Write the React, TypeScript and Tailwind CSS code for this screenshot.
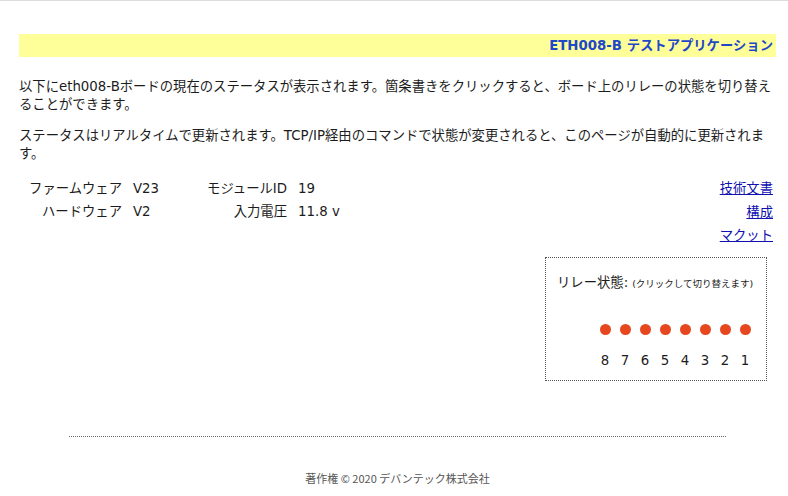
import React from "react";

const font = { fontFamily: '"DejaVu Sans", Verdana, "Noto Sans CJK JP", sans-serif' };

export default function App() {
  const relays = [8, 7, 6, 5, 4, 3, 2, 1];
  return (
    <div className="min-h-[496px] w-[788px] bg-white border-t border-[#dcdcdc] text-[#1c1c1c]" style={font}>
      <div className="ml-[19px] w-[757px] pt-[33px]">
        <div className="h-[23px] bg-[#ffff99] flex items-center justify-end pr-[3px]">
          <span className="text-[13.33px] font-bold text-[#1f48c9] leading-none">ETH008-B テストアプリケーション</span>
        </div>

        <p className="mt-[21px] text-[13.33px] leading-[18px]">
          以下にeth008-Bボードの現在のステータスが表示されます。箇条書きをクリックすると、ボード上のリレーの状態を切り替えることができます。
        </p>
        <p className="mt-[13px] text-[13.33px] leading-[18px]">
          ステータスはリアルタイムで更新されます。TCP/IP経由のコマンドで状態が変更されると、このページが自動的に更新されます。
        </p>

        <div className="mt-[14px] flex justify-between">
          <div className="grid grid-cols-[103px_60px_83px_auto] gap-x-[11px] text-[13.33px] leading-[23px] h-fit">
            <div className="text-right">ファームウェア</div>
            <div>V23</div>
            <div className="text-right">モジュールID</div>
            <div>19</div>
            <div className="text-right">ハードウェア</div>
            <div>V2</div>
            <div className="text-right">入力電圧</div>
            <div>11.8 v</div>
          </div>
          <div className="flex flex-col items-end pr-[3px] text-[13.33px] leading-[23.5px]">
            <a href="#" className="text-[#1010b0] underline">技術文書</a>
            <a href="#" className="text-[#1010b0] underline">構成</a>
            <a href="#" className="text-[#1010b0] underline">マクット</a>
          </div>
        </div>

        <div className="flex justify-end mt-[9px] pr-[9px]">
          <div className="w-[222px] h-[124px] border border-dotted border-[#555] pl-[11px] pr-[11px] pt-[16px]">
            <div className="flex items-baseline">
              <span className="text-[13.33px] leading-[18px]">リレー状態:</span>
              <span className="text-[9.5px] ml-[4px]">(クリックして切り替えます)</span>
            </div>
            <div className="flex justify-end mt-[32px]">
              {relays.map((n) => (
                <div key={n} className="w-[20px] flex justify-center">
                  <span className="block w-[11px] h-[11px] rounded-full bg-[#e6471f]" />
                </div>
              ))}
            </div>
            <div className="flex justify-end mt-[17px]">
              {relays.map((n) => (
                <div key={n} className="w-[20px] text-center text-[13.33px] leading-[18px]">{n}</div>
              ))}
            </div>
          </div>
        </div>

        <div className="mx-[50px] mt-[55px] border-t border-dotted border-[#666]" />

        <div
          className="mt-[33px] text-center text-[11px] text-[#555]"
          style={{ fontFamily: '"Noto Sans CJK JP", "Noto Sans", sans-serif' }}
        >
          著作権 © 2020 デバンテック株式会社
        </div>
      </div>
    </div>
  );
}
